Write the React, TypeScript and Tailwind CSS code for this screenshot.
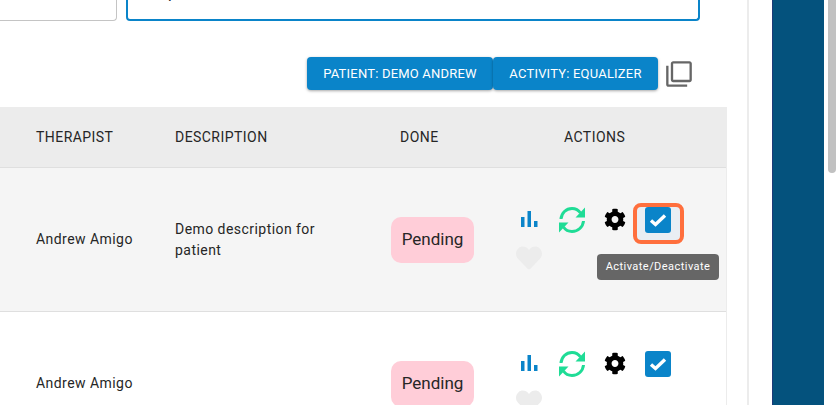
import React from 'react';
import { FaCog, FaHeart } from 'react-icons/fa';
import { MdOutlineFilterNone } from 'react-icons/md';

const SyncIcon = () => (
    <svg width="30" height="30" viewBox="0 0 30 30" fill="none" className="text-[#1fdc96]">
        <path d="M4 14C4.500 8 9 3.500 15 3.500c3.500 0 6.500 1.500 8.500 4.500" stroke="currentColor" strokeWidth="3" />
        <path d="M26.500 16C26 22 21 26.500 15 26.500c-3.500 0-6.500-1.500-8.500-4.500" stroke="currentColor" strokeWidth="3" />
        <path d="M28 2.500V12.500H18.500Z" fill="currentColor" />
        <path d="M2 27.500V17.500H11.500Z" fill="currentColor" />
    </svg>
);

const BarsIcon = () => (
    <svg width="18" height="18" viewBox="0 0 18 18" className="text-[#0a84c9] -translate-y-px" fill="currentColor">
        <rect x="1" y="7" width="3.500" height="10" />
        <rect x="7.500" y="1" width="3.500" height="16" />
        <rect x="14" y="11" width="3.500" height="6" />
    </svg>
);

const CheckBox = ({ highlight }: { highlight?: boolean }) => (
    <div className="relative w-[26px] h-[26px]">
        {highlight && (
            <div className="absolute -left-[12px] -top-[4px] w-[51px] h-[41px] rounded-[8px] border-[4px] border-[#ff6f3d] bg-[#e9eef3]" />
        )}
        <div className="relative w-[26px] h-[26px] rounded-[3px] bg-[#0a84c9] flex items-center justify-center">
            <svg width="18" height="14" viewBox="0 0 18 14" fill="none">
                <path d="M2 7.500 6.500 11.500 16 2.500" stroke="white" strokeWidth="3.400" />
            </svg>
        </div>
    </div>
);

const ActionIcons = ({ highlight }: { highlight?: boolean }) => (
    <div className="flex flex-col">
        <div className="flex items-center h-[30px]">
            <div className="w-[18px] flex justify-center">
                <BarsIcon />
            </div>
            <div className="ml-[19px] w-[30px] flex justify-center">
                <SyncIcon />
            </div>
            <div className="ml-[17px] w-[22px] flex justify-center">
                <FaCog size={23} className="text-black" />
            </div>
            <div className="ml-[19px] w-[26px] flex justify-center">
                <CheckBox highlight={highlight} />
            </div>
        </div>
        <div className="mt-[10px] -ml-[4px] h-[30px] w-[26px] flex justify-center">
            <FaHeart size={26} className="text-[#ececec]" />
        </div>
    </div>
);

const Row = ({ description, shaded }: { description: React.ReactNode; shaded?: boolean }) => (
    <div className={`flex items-center h-[144px] border-b border-[#dfdfdf] ${shaded ? 'bg-[#f5f5f5]' : 'bg-white'}`}>
        <div className="w-[175px] pl-[36px] text-[14px]">Andrew Amigo</div>
        <div className="w-[216px] text-[14px] leading-[21px]">{description}</div>
        <div className="w-[129px]">
            <span className="inline-flex items-center justify-center w-[83px] h-[46px] rounded-[10px] bg-[#ffcdd8] text-[17px] tracking-normal">
                Pending
            </span>
        </div>
        <ActionIcons highlight={shaded} />
    </div>
);

export default function App() {
    return (
        <div className="relative flex w-[840px] h-[405px] overflow-hidden bg-white font-['Roboto',sans-serif] text-[#262626] tracking-[0.45px]">
            <div className="w-[749px] h-[405px] border-r-2 border-[#ececec] overflow-hidden shrink-0">
                <div className="flex gap-[9px] h-[21px] pr-[47px]">
                    <div className="w-[117px] h-[21px] border-r border-b border-[#c4c4c4] rounded-br-[4px]" />
                    <div className="flex-1 h-[21px] border-l-2 border-r-2 border-b-2 border-[#0a84c9] rounded-b-[4px] pl-[40px] text-[16px] leading-[0] overflow-hidden">
                        <span className="block -mt-[7px]">p</span>
                    </div>
                </div>
                <div className="flex items-center mt-[36px] ml-[307px] h-[33px]">
                    <button className="w-[186px] h-[33px] rounded-[4px] bg-[#0a84c9] text-white text-[13px] font-normal tracking-[0.2px] shadow-[0_1px_3px_rgba(0,0,0,0.35)]">
                        PATIENT: DEMO ANDREW
                    </button>
                    <button className="w-[165px] h-[33px] rounded-[4px] bg-[#0a84c9] text-white text-[13px] font-normal tracking-[0.2px] shadow-[0_1px_3px_rgba(0,0,0,0.35)]">
                        ACTIVITY: EQUALIZER
                    </button>
                    <MdOutlineFilterNone size={28} className="ml-[7px] text-[#666666]" />
                </div>
                <div className="mt-[17px] w-[727px] border-r border-[#ececec]">
                    <div className="flex items-center h-[61px] bg-[#ececec] border-b border-[#dfdfdf] text-[14px]">
                        <div className="w-[175px] pl-[36px]">THERAPIST</div>
                        <div className="w-[225px]">DESCRIPTION</div>
                        <div className="w-[164px]">DONE</div>
                        <div>ACTIONS</div>
                    </div>
                    <Row shaded description={<>Demo description for<br />patient</>} />
                    <Row description="" />
                </div>
            </div>
            <div className="w-[23px] shrink-0" />
            <div className="w-[52px] shrink-0 bg-[#04527d] border-l border-[#1e3a78]" />
            <div className="flex-1 flex justify-center bg-white">
                <div className="w-[8px] h-[173px] rounded-b-[4px] bg-[#c1c1c1]" />
            </div>

            <div className="absolute left-[597px] top-[254px] w-[122px] h-[26px] rounded-[4px] bg-[#666666] text-white text-[11px] font-normal tracking-[0.45px] flex items-center justify-center">
                Activate/Deactivate
            </div>
        </div>
    );
}
